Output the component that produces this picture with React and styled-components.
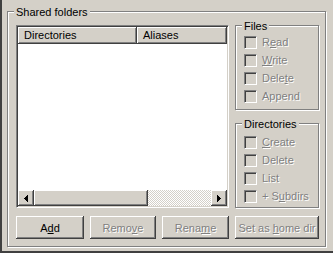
import React from "react";
import { styled, createGlobalStyle, css } from "styled-components";

const face = "#d4d0c8";
const shadow = "#808080";
const dark = "#404040";

const raised = css`
  box-shadow: inset -1px -1px ${dark}, inset 1px 1px #fff, inset -2px -2px ${shadow}, inset 2px 2px ${face};
`;

const GlobalStyle = createGlobalStyle`
  html, body {
    margin: 0;
    padding: 0;
    background: ${face};
  }
  body {
    font-family: "Liberation Sans", Arial, sans-serif;
    font-size: 11px;
    color: #000;
  }
`;

const ArrowIcon = ({ dir }) => {
  const rows = [[3, 1], [2, 2], [1, 3], [0, 4], [1, 3], [2, 2], [3, 1]];
  return (
    <svg width="4" height="7" viewBox="0 0 4 7" shapeRendering="crispEdges">
      {rows.map(([x, w], y) => (
        <rect key={y} x={dir === "left" ? x : 0} y={y} width={w} height="1" fill="#000" />
      ))}
    </svg>
  );
};

const Check = ({ children, disabled = true }) => (
  <CheckRow $disabled={disabled}>
    <CheckBox />
    <span>{children}</span>
  </CheckRow>
);

const App = () => {
  return (
    <Window>
      <GlobalStyle />
      <Group $pad="13px 6px 7px 8px" $grow>
        <Caption>Shared folders</Caption>
        <TopRow>
          <ListBox>
            <Header>
              <HeaderCell $w={119}>Directories</HeaderCell>
              <HeaderCell $fill>Aliases</HeaderCell>
            </Header>
            <ListBody />
            <ScrollBar>
              <ScrollButton>
                <ArrowIcon dir="left" />
              </ScrollButton>
              <Thumb />
              <Track />
              <ScrollButton>
                <ArrowIcon dir="right" />
              </ScrollButton>
            </ScrollBar>
          </ListBox>
          <SideColumn>
            <Group $pad="10px 4px 0 8px" $h={85}>
              <Caption>Files</Caption>
              <CheckList>
                <Check>R<u>e</u>ad</Check>
                <Check><u>W</u>rite</Check>
                <Check>Dele<u>t</u>e</Check>
                <Check>Append</Check>
              </CheckList>
            </Group>
            <Group $pad="12px 4px 0 8px" $h={85}>
              <Caption>Directories</Caption>
              <CheckList>
                <Check><u>C</u>reate</Check>
                <Check>Delete</Check>
                <Check>List</Check>
                <Check>+ S<u>u</u>bdirs</Check>
              </CheckList>
            </Group>
          </SideColumn>
        </TopRow>
        <ButtonRow>
          <Button $w={68}>A<u>d</u>d</Button>
          <Button $w={66} disabled>Remo<u>v</u>e</Button>
          <Button $w={67} disabled>Rena<u>m</u>e</Button>
          <Button $w={84} disabled>Set as <u>h</u>ome dir</Button>
        </ButtonRow>
      </Group>
    </Window>
  );
};

const Window = styled.div`
  box-sizing: border-box;
  width: 333px;
  height: 253px;
  display: flex;
  flex-direction: column;
  border-left: 2px solid ${dark};
  border-bottom: 2px solid ${dark};
  padding: 11px 7px 4px 5px;
  background: ${face};
  overflow: hidden;
`;

const Group = styled.div`
  position: relative;
  box-sizing: border-box;
  display: flex;
  flex-direction: column;
  border: 1px solid ${shadow};
  box-shadow: inset 1px 1px 0 #fff, 1px 1px 0 #fff;
  padding: ${(p) => p.$pad};
  ${(p) => p.$grow && "flex: 1;"}
  ${(p) => p.$h && `height: ${p.$h}px;`}
`;

const Caption = styled.span`
  position: absolute;
  top: -6px;
  left: 6px;
  padding: 0 2px;
  line-height: 13px;
  background: ${face};
  white-space: nowrap;
`;

const TopRow = styled.div`
  display: flex;
  gap: 6px;
  height: 183px;
`;

const ListBox = styled.div`
  box-sizing: border-box;
  width: 213px;
  display: flex;
  flex-direction: column;
  padding: 1px;
  background: #fff;
  border: 1px solid;
  border-color: ${shadow} #fff #fff ${shadow};
  box-shadow: inset 1px 1px ${dark}, inset -1px -1px ${face};
`;

const Header = styled.div`
  display: flex;
  height: 17px;
  background: ${face};
`;

const HeaderCell = styled.div`
  box-sizing: border-box;
  width: ${(p) => (p.$w ? `${p.$w}px` : "auto")};
  flex: ${(p) => (p.$fill ? 1 : "none")};
  padding-left: 6px;
  line-height: 17px;
  white-space: nowrap;
  ${raised}
`;

const ListBody = styled.div`
  flex: 1;
  background: #fff;
`;

const ScrollBar = styled.div`
  display: flex;
  height: 16px;
  background: repeating-conic-gradient(#fff 0 25%, ${face} 0 50%) 0 0 / 2px 2px;
`;

const ScrollButton = styled.div`
  width: 16px;
  height: 16px;
  display: flex;
  align-items: center;
  justify-content: center;
  background: ${face};
  ${raised}
`;

const Thumb = styled.div`
  width: 114px;
  background: ${face};
  ${raised}
`;

const Track = styled.div`
  flex: 1;
`;

const SideColumn = styled.div`
  display: flex;
  flex-direction: column;
  gap: 13px;
  width: 84px;
`;

const CheckList = styled.div`
  display: flex;
  flex-direction: column;
  gap: 5px;
`;

const CheckRow = styled.label`
  display: flex;
  align-items: center;
  gap: 5px;
  height: 13px;
  line-height: 13px;
  white-space: nowrap;
  color: ${(p) => (p.$disabled ? shadow : "#000")};
  text-shadow: ${(p) => (p.$disabled ? "1px 1px 0 #fff" : "none")};
`;

const CheckBox = styled.span`
  box-sizing: border-box;
  width: 13px;
  height: 13px;
  flex: none;
  background: ${face};
  border: 1px solid;
  border-color: ${shadow} #fff #fff ${shadow};
  box-shadow: inset 1px 1px ${dark}, inset -1px -1px ${face};
`;

const ButtonRow = styled.div`
  display: flex;
  gap: 6px;
  margin-top: 8px;
`;

const Button = styled.button`
  box-sizing: border-box;
  width: ${(p) => p.$w}px;
  height: 23px;
  padding: 0;
  border: none;
  background: ${face};
  font-family: "Liberation Sans", Arial, sans-serif;
  font-size: 11px;
  color: #000;
  white-space: nowrap;
  ${raised}
  &:disabled {
    color: ${shadow};
    text-shadow: 1px 1px 0 #fff;
  }
`;

export default App;
